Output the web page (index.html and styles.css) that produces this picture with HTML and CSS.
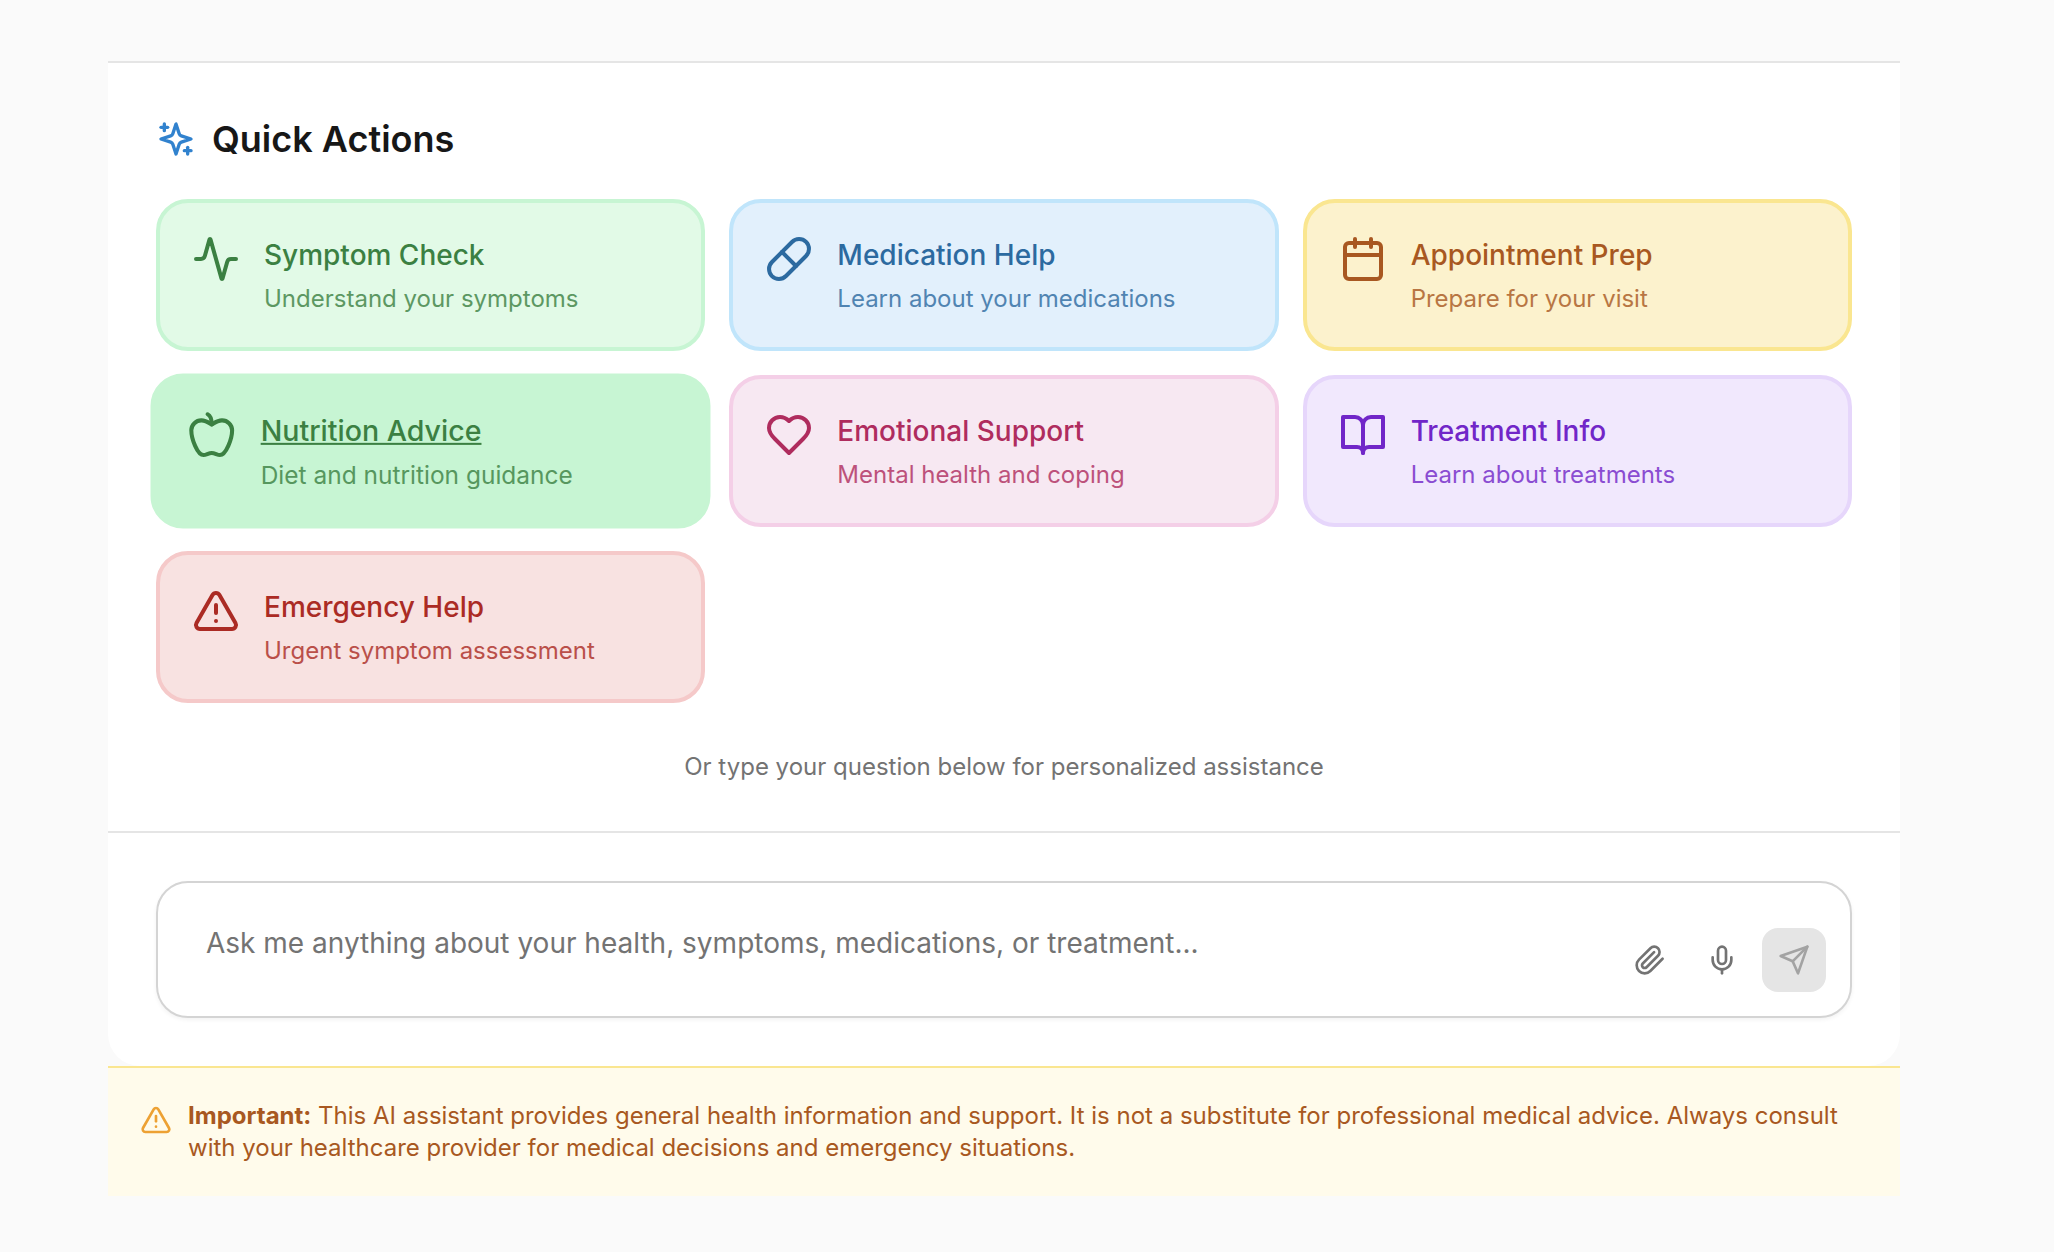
FILE: index.html
```html
<!DOCTYPE html>
<html lang="en">
<head>
<meta charset="utf-8">
<meta name="viewport" content="width=device-width, initial-scale=1">
<title>Health Assistant</title>
<link rel="stylesheet" href="styles.css">
</head>
<body>
<main class="assistant">
  <div class="panel">
    <section class="quick" aria-labelledby="quick-title">
      <header class="quick-header">
        <svg class="icon icon-md icon-accent" viewBox="0 0 24 24" aria-hidden="true"><path d="m12 3-1.912 5.813a2 2 0 0 1-1.275 1.275L3 12l5.813 1.912a2 2 0 0 1 1.275 1.275L12 21l1.912-5.813a2 2 0 0 1 1.275-1.275L21 12l-5.813-1.912a2 2 0 0 1-1.275-1.275L12 3Z"/><path d="M5 3v4"/><path d="M19 17v4"/><path d="M3 5h4"/><path d="M17 19h4"/></svg>
        <h2 class="quick-title" id="quick-title">Quick Actions</h2>
      </header>
      <div class="actions">
        <button type="button" class="action action-green">
          <svg class="icon icon-lg" viewBox="0 0 24 24" aria-hidden="true"><path d="M22 12h-2.480a2 2 0 0 0-1.930 1.460l-2.350 8.360a.25.25 0 0 1-.48 0L9.240 2.180a.25.25 0 0 0-.48 0l-2.350 8.360A2 2 0 0 1 4.490 12H2"/></svg>
          <span class="action-text"><span class="action-title">Symptom Check</span><span class="action-desc">Understand your symptoms</span></span>
        </button>
        <button type="button" class="action action-blue">
          <svg class="icon icon-lg" viewBox="0 0 24 24" aria-hidden="true"><path d="m10.500 20.500 10-10a4.950 4.950 0 1 0-7-7l-10 10a4.950 4.950 0 1 0 7 7Z"/><path d="m8.500 8.500 7 7"/></svg>
          <span class="action-text"><span class="action-title">Medication Help</span><span class="action-desc">Learn about your medications</span></span>
        </button>
        <button type="button" class="action action-amber">
          <svg class="icon icon-lg" viewBox="0 0 24 24" aria-hidden="true"><path d="M8 2v4"/><path d="M16 2v4"/><rect width="18" height="18" x="3" y="4" rx="2"/><path d="M3 10h18"/></svg>
          <span class="action-text"><span class="action-title">Appointment Prep</span><span class="action-desc">Prepare for your visit</span></span>
        </button>
        <button type="button" class="action action-green action-active">
          <svg class="icon icon-lg" viewBox="0 0 24 24" aria-hidden="true"><path d="M12 20.940c1.500 0 2.750 1.060 4 1.060 3 0 6-8 6-12.220A4.910 4.910 0 0 0 17 5c-2.220 0-4 1.440-5 2-1-.56-2.780-2-5-2a4.900 4.900 0 0 0-5 4.780C2 14 5 22 8 22c1.250 0 2.500-1.060 4-1.060Z"/><path d="M10 2c1 .5 2 2 2 5"/></svg>
          <span class="action-text"><span class="action-title">Nutrition Advice</span><span class="action-desc">Diet and nutrition guidance</span></span>
        </button>
        <button type="button" class="action action-pink">
          <svg class="icon icon-lg" viewBox="0 0 24 24" aria-hidden="true"><path d="M19 14c1.490-1.460 3-3.210 3-5.500A5.500 5.500 0 0 0 16.500 3c-1.760 0-3 .5-4.500 2-1.500-1.500-2.740-2-4.500-2A5.500 5.500 0 0 0 2 8.500c0 2.300 1.500 4.050 3 5.500l7 7Z"/></svg>
          <span class="action-text"><span class="action-title">Emotional Support</span><span class="action-desc">Mental health and coping</span></span>
        </button>
        <button type="button" class="action action-purple">
          <svg class="icon icon-lg" viewBox="0 0 24 24" aria-hidden="true"><path d="M2 3h6a4 4 0 0 1 4 4v14a3 3 0 0 0-3-3H2z"/><path d="M22 3h-6a4 4 0 0 0-4 4v14a3 3 0 0 1 3-3h7z"/></svg>
          <span class="action-text"><span class="action-title">Treatment Info</span><span class="action-desc">Learn about treatments</span></span>
        </button>
        <button type="button" class="action action-red">
          <svg class="icon icon-lg" viewBox="0 0 24 24" aria-hidden="true"><path d="m21.730 18-8-14a2 2 0 0 0-3.480 0l-8 14A2 2 0 0 0 4 21h16a2 2 0 0 0 1.730-3Z"/><path d="M12 9v4"/><path d="M12 17h.01"/></svg>
          <span class="action-text"><span class="action-title">Emergency Help</span><span class="action-desc">Urgent symptom assessment</span></span>
        </button>
      </div>
      <p class="quick-hint">Or type your question below for personalized assistance</p>
    </section>

    <form class="composer">
      <div class="composer-box">
        <textarea class="composer-input" rows="1" aria-label="Your question" placeholder="Ask me anything about your health, symptoms, medications, or treatment..."></textarea>
        <div class="composer-tools">
          <button type="button" class="tool" aria-label="Attach file">
            <svg class="icon icon-sm" viewBox="0 0 24 24" aria-hidden="true"><path d="m21.440 11.050-9.190 9.190a6 6 0 0 1-8.490-8.490l8.570-8.570A4 4 0 1 1 18 8.840l-8.590 8.570a2 2 0 0 1-2.830-2.830l8.490-8.480"/></svg>
          </button>
          <button type="button" class="tool" aria-label="Voice input">
            <svg class="icon icon-sm" viewBox="0 0 24 24" aria-hidden="true"><path d="M12 2a3 3 0 0 0-3 3v7a3 3 0 0 0 6 0V5a3 3 0 0 0-3-3Z"/><path d="M19 10v2a7 7 0 0 1-14 0v-2"/><path d="M12 19v3"/></svg>
          </button>
          <button type="submit" class="tool tool-send" aria-label="Send" disabled>
            <svg class="icon icon-sm" viewBox="0 0 24 24" aria-hidden="true"><path d="m22 2-7 20-4-9-9-4Z"/><path d="M22 2 11 13"/></svg>
          </button>
        </div>
      </div>
    </form>
  </div>

  <aside class="notice">
    <svg class="icon icon-sm notice-icon" viewBox="0 0 24 24" aria-hidden="true"><path d="m21.730 18-8-14a2 2 0 0 0-3.480 0l-8 14A2 2 0 0 0 4 21h16a2 2 0 0 0 1.730-3Z"/><path d="M12 9v4"/><path d="M12 17h.01"/></svg>
    <p class="notice-text"><strong>Important:</strong> This AI assistant provides general health information and support. It is not a substitute for professional medical advice. Always consult with your healthcare provider for medical decisions and emergency situations.</p>
  </aside>
</main>
</body>
</html>
```

FILE: styles.css
```css
*,
*::before,
*::after {
  box-sizing: border-box;
}

body {
  margin: 0;
  padding: 61px 154px 56px 108px;
  background: #fafafa;
  color: #171717;
  font-family: Inter, "Liberation Sans", sans-serif;
  font-size: 24px;
  line-height: 32px;
}

button,
textarea {
  font: inherit;
}

h2,
p {
  margin: 0;
}

/* Icons */
.icon {
  flex: none;
  display: block;
  fill: none;
  stroke: currentColor;
  stroke-width: 2;
  stroke-linecap: round;
  stroke-linejoin: round;
}

.icon-sm {
  width: 32px;
  height: 32px;
}

.icon-md {
  width: 40px;
  height: 40px;
}

.icon-lg {
  width: 48px;
  height: 48px;
}

.icon-accent {
  color: #3182ce;
}

/* Panel */
.panel {
  overflow: hidden;
  background: #fff;
  border-radius: 0 0 32px 32px;
}

.quick,
.composer {
  padding: 48px;
  border-top: 2px solid #e5e5e5;
}

.quick-header {
  display: flex;
  align-items: center;
  gap: 16px;
  margin-bottom: 32px;
}

.quick-title {
  font-size: 36px;
  font-weight: 600;
  line-height: 56px;
}

.quick-hint {
  margin-top: 48px;
  color: #737373;
  text-align: center;
}

/* Action cards */
.actions {
  display: grid;
  grid-template-columns: repeat(3, minmax(0, 1fr));
  gap: 24px;
}

.action {
  display: flex;
  align-items: flex-start;
  gap: 24px;
  padding: 32px;
  border: 4px solid;
  border-radius: 32px;
  text-align: left;
  cursor: pointer;
}

.action-text {
  display: flex;
  flex-direction: column;
  gap: 8px;
}

.action-title {
  font-size: 28px;
  font-weight: 500;
  line-height: 40px;
}

.action-desc {
  opacity: 0.8;
}

.action-green {
  background: #e2fae7;
  border-color: #c7f5d3;
  color: #3b8042;
}

.action-blue {
  background: #e2f0fc;
  border-color: #c0e5fb;
  color: #2c6aa0;
}

.action-amber {
  background: #fcf2cd;
  border-color: #fae690;
  color: #a85821;
}

.action-pink {
  background: #f7e8f2;
  border-color: #f4cfe7;
  color: #af2c5e;
}

.action-purple {
  background: #f1e8fd;
  border-color: #e6d6fb;
  color: #7126c8;
}

.action-red {
  background: #f8e2e1;
  border-color: #f5c9c9;
  color: #ab2b24;
}

.action-active {
  background: #c7f5d3;
  transform: scale(1.02);
}

.action-active .action-title {
  text-decoration: underline;
}

/* Composer */
.composer-box {
  display: flex;
  align-items: flex-end;
  gap: 24px;
  padding: 0 24px 24px 48px;
  border: 2px solid #d4d4d4;
  border-radius: 32px;
  background: #fff;
  box-shadow: 0 2px 4px rgba(0, 0, 0, 0.05);
}

.composer-input {
  flex: 1;
  height: 109px;
  padding: 40px 0 0;
  border: 0;
  outline: 0;
  resize: none;
  overflow: hidden;
  background: transparent;
  color: #171717;
  font-size: 28px;
  line-height: 40px;
}

.composer-input::placeholder {
  color: #737373;
  opacity: 1;
}

.composer-tools {
  display: flex;
  gap: 8px;
}

.tool {
  display: grid;
  place-items: center;
  width: 64px;
  height: 64px;
  padding: 0;
  border: 0;
  border-radius: 16px;
  background: transparent;
  color: #737373;
}

.tool-send {
  background: #e5e5e5;
  color: #a3a3a3;
}

/* Medical notice */
.notice {
  display: flex;
  align-items: flex-start;
  gap: 16px;
  padding: 32px;
  border-top: 2px solid #fae690;
  background: #fffbeb;
  color: #a85821;
}

.notice-icon {
  margin-top: 4px;
  color: #eda133;
}

.notice-text strong {
  font-weight: 700;
}
```
